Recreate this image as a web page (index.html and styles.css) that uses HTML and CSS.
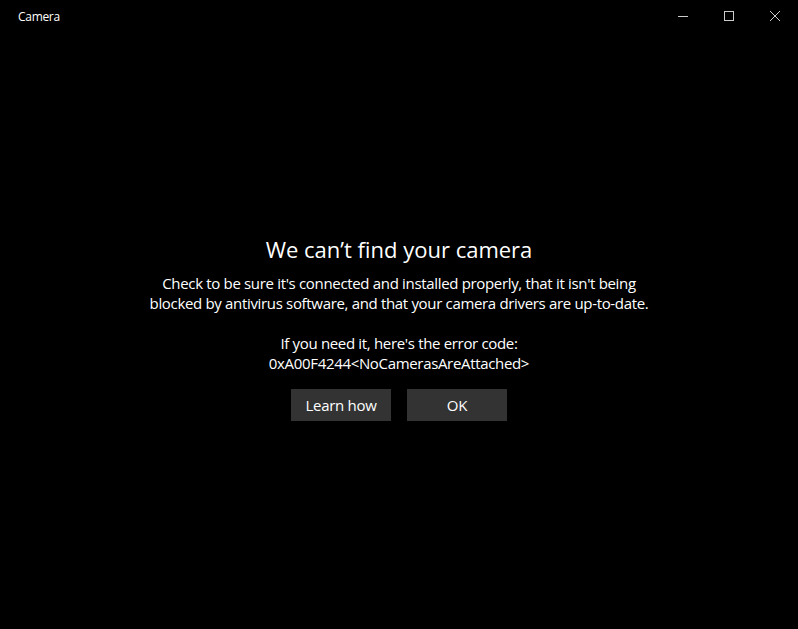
FILE: index.html
```html
<!DOCTYPE html>
<html>
<head>
<meta charset="utf-8">
<link rel="stylesheet" href="styles.css">
</head>
<body>
<div class="window">
  <div class="titlebar">
    <div class="app-title">Camera</div>
    <div class="controls">
      <div class="ctl"><svg width="10" height="10" viewBox="0 0 10 10"><path d="M0 5.5H10" stroke="#fff" stroke-width="1"/></svg></div>
      <div class="ctl"><svg width="10" height="10" viewBox="0 0 10 10"><rect x="0.5" y="0.5" width="9" height="9" fill="none" stroke="#fff" stroke-width="1"/></svg></div>
      <div class="ctl"><svg width="10" height="10" viewBox="0 0 10 10"><path d="M0 0L10 10M10 0L0 10" stroke="#fff" stroke-width="1"/></svg></div>
    </div>
  </div>
  <div class="content">
    <div class="message">
      <h1 class="heading">We can’t find your camera</h1>
      <p class="desc">Check to be sure it's connected and installed properly, that it isn't being<br>blocked by antivirus software, and that your camera drivers are up-to-date.</p>
      <p class="desc code">If you need it, here's the error code:<br>0xA00F4244&lt;NoCamerasAreAttached&gt;</p>
      <div class="buttons">
        <button class="btn">Learn how</button>
        <button class="btn">OK</button>
      </div>
    </div>
  </div>
</div>
</body>
</html>
```
FILE: styles.css
```css
html, body {
  margin: 0;
  padding: 0;
  background: #000;
  color: #fff;
  font-family: "Open Sans", "Noto Sans", sans-serif;
}
.window {
  width: 798px;
  height: 629px;
  display: flex;
  flex-direction: column;
}
.titlebar {
  height: 32px;
  display: flex;
  align-items: center;
  justify-content: space-between;
  flex-shrink: 0;
}
.app-title {
  padding-left: 18px;
  font-size: 12px;
  letter-spacing: -0.3px;
}
.controls {
  display: flex;
  height: 32px;
}
.ctl {
  width: 46px;
  height: 32px;
  display: flex;
  align-items: center;
  justify-content: center;
  opacity: 0.8;
}
.content {
  flex: 1;
  display: flex;
  align-items: center;
  justify-content: center;
  padding-bottom: 6px;
}
.message {
  text-align: center;
}
.heading {
  margin: 0 0 9px;
  font-size: 22px;
  font-weight: 400;
  line-height: 30px;
}
.desc {
  margin: 0;
  font-size: 15px;
  line-height: 20px;
  letter-spacing: -0.33px;
}
.code {
  margin-top: 20px;
}
.buttons {
  display: flex;
  justify-content: center;
  gap: 16px;
  margin-top: 16px;
}
.btn {
  width: 100px;
  height: 32px;
  background: #333;
  border: none;
  color: #fff;
  font-family: inherit;
  font-size: 15px;
  letter-spacing: -0.3px;
  padding: 0;
}
```
